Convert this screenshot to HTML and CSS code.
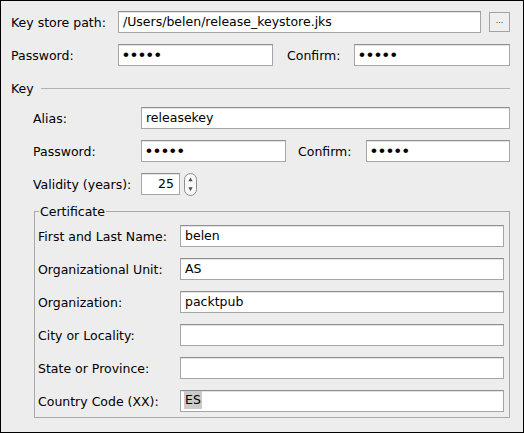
FILE: index.html
```html
<!DOCTYPE html>
<html lang="en">
<head>
<meta charset="utf-8">
<title>Key store</title>
<link rel="stylesheet" href="styles.css">
</head>
<body>
<div class="window">
  <div class="row">
    <span class="label w107">Key store path:</span>
    <div class="field w363">/Users/belen/release_keystore.jks</div>
    <span class="browse">...</span>
  </div>
  <div class="row gap">
    <span class="label w107">Password:</span>
    <div class="field pw w155">•••••</div>
    <span class="label confirm1">Confirm:</span>
    <div class="field pw w156">•••••</div>
  </div>
  <div class="section-head">
    <span class="head-text">Key</span>
    <span class="rule"></span>
  </div>
  <div class="key">
    <div class="row">
      <span class="label w108">Alias:</span>
      <div class="field grow">releasekey</div>
    </div>
    <div class="row gap">
      <span class="label w108">Password:</span>
      <div class="field pw w145">•••••</div>
      <span class="label confirm2">Confirm:</span>
      <div class="field pw w144">•••••</div>
    </div>
    <div class="row gap">
      <span class="label w108">Validity (years):</span>
      <div class="field num w39">25</div>
      <svg class="spin" width="13" height="23" viewBox="0 0 13 23">
        <rect x="0.5" y="0.5" width="12" height="22" rx="6" fill="#f8f8f8" stroke="#8e8e8e"/>
        <path d="M6.5 4.5 L8.6 8.2 H4.4 Z" fill="#4a4a4a"/>
        <path d="M6.5 18 L8.6 14.3 H4.4 Z" fill="#4a4a4a"/>
      </svg>
    </div>
    <fieldset class="cert">
      <legend>Certificate</legend>
      <div class="row">
        <span class="label w142">First and Last Name:</span>
        <div class="field w324">belen</div>
      </div>
      <div class="row gap">
        <span class="label w142">Organizational Unit:</span>
        <div class="field w324">AS</div>
      </div>
      <div class="row gap">
        <span class="label w142">Organization:</span>
        <div class="field w324">packtpub</div>
      </div>
      <div class="row gap">
        <span class="label w142">City or Locality:</span>
        <div class="field w324"></div>
      </div>
      <div class="row gap">
        <span class="label w142">State or Province:</span>
        <div class="field w324"></div>
      </div>
      <div class="row gap">
        <span class="label w142">Country Code (XX):</span>
        <div class="field w324 sel-field"><span class="sel">ES</span></div>
      </div>
    </fieldset>
  </div>
</div>
</body>
</html>
```
FILE: styles.css
```css
* { box-sizing: border-box; }
html, body { margin: 0; padding: 0; }
body {
  font-family: "DejaVu Sans", "Liberation Sans", sans-serif;
  font-size: 12.5px;
  color: #000;
  background: #ededed;
}
.window {
  width: 524px;
  height: 433px;
  border: 1px solid #000;
  background: #ededed;
  padding: 10px 13px 0 10px;
}
.row {
  display: flex;
  align-items: center;
  height: 22px;
}
.row.gap { margin-top: 11px; }
.label { white-space: nowrap; flex: none; }
.w107 { width: 107px; }
.w108 { width: 108px; }
.w142 { width: 142px; }
.confirm1 { width: 67px; margin-left: 14px; }
.confirm2 { width: 68px; margin-left: 12px; }
.field {
  flex: none;
  height: 22px;
  background: #fff;
  border: 1px solid #a6a6a6;
  border-top-color: #8f8f8f;
  box-shadow: inset 0 1px 0 #e4e4e4;
  padding: 0 4px;
  line-height: 20px;
  white-space: nowrap;
  overflow: hidden;
}
.grow { flex: 1; }
.w363 { width: 363px; }
.w155 { width: 155px; }
.w156 { width: 156px; }
.w145 { width: 145px; }
.w144 { width: 144px; }
.w39 { width: 39px; }
.w324 { width: 324px; }
.pw {
  font-family: "Liberation Sans", Arial, sans-serif;
  font-size: 17px;
  letter-spacing: 2px;
  line-height: 19px;
}
.num { text-align: right; padding-right: 5px; }
.browse {
  display: block;
  flex: none;
  width: 21px;
  height: 20px;
  margin-left: 8px;
  border: 1px solid #a3a3a3;
  background: #efefef;
  font-family: "Liberation Sans", Arial, sans-serif;
  font-size: 9px;
  line-height: 14px;
  text-align: center;
  color: #333;
}
.section-head {
  display: flex;
  align-items: center;
  height: 16px;
  margin-top: 14px;
}
.head-text { flex: none; }
.rule {
  flex: 1;
  height: 1px;
  margin-left: 7px;
  background: #b3b3b3;
}
.key {
  padding-left: 22px;
  margin-top: 11px;
}
.spin { flex: none; margin-left: 4px; display: block; }
.cert {
  margin: 9px 0 0 1px;
  padding: 6px 5px 5px 3px;
  border: 1px solid #a9a9a9;
  min-width: 0;
}
.cert legend {
  padding: 0 1px;
  margin-left: 1px;
  line-height: 15px;
}
.sel-field { padding-left: 3px; }
.sel {
  display: inline-block;
  background: #cacaca;
  line-height: 18px;
  padding: 0 1px;
  vertical-align: top;
}
```
